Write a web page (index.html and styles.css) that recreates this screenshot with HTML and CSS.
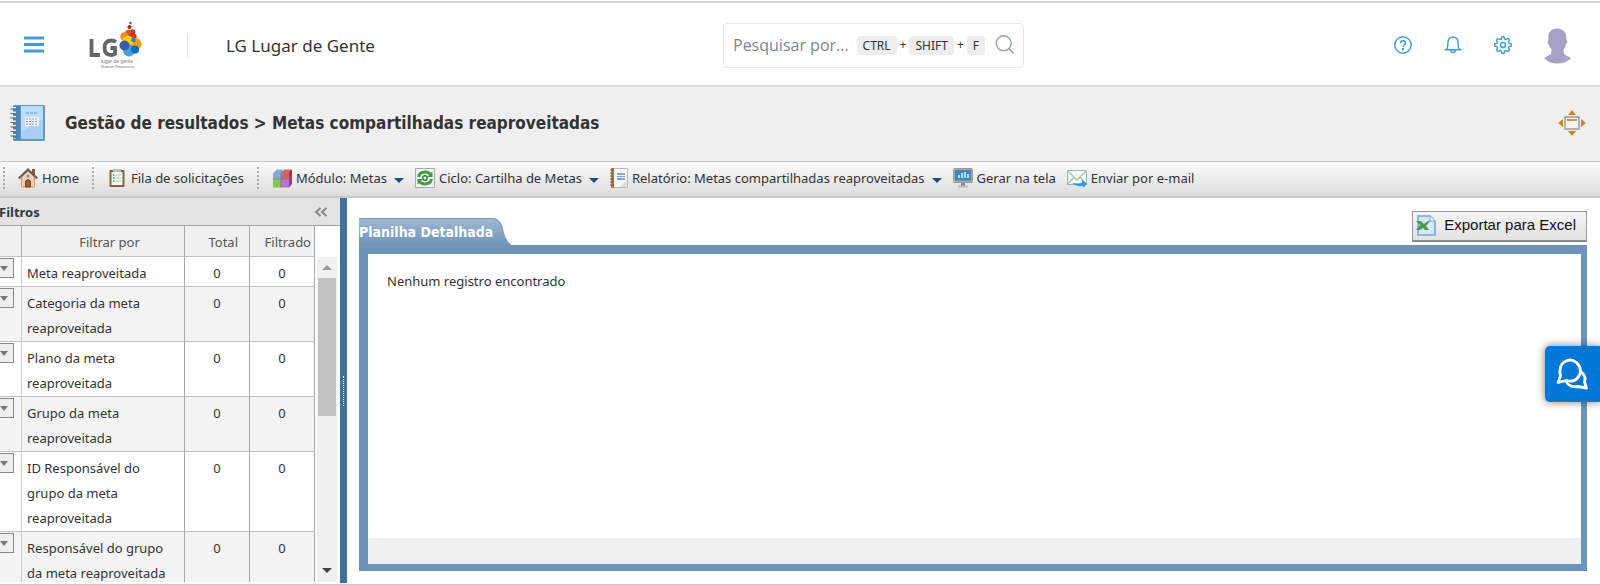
FILE: index.html
```html
<!DOCTYPE html>
<html lang="pt-BR">
<head>
<meta charset="utf-8">
<title>Metas compartilhadas reaproveitadas</title>
<link rel="stylesheet" href="styles.css">
</head>
<body>
<header class="topbar">
  <button class="icon-btn menu" aria-label="Menu"><svg width="20" height="18" viewBox="0 0 20 18"><path d="M0 2h20M0 8.500h20M0 15h20" stroke="#3d9ddb" stroke-width="3"/></svg></button>
  <div class="logo">
    <svg width="56" height="48" viewBox="0 0 56 48">
      <circle cx="43.500" cy="2" r="1.200" fill="#a5382c"/><circle cx="42.500" cy="6" r="2.100" fill="#982f2b"/>
      <circle cx="45.500" cy="11" r="2.800" fill="#c33a2b"/><circle cx="41.500" cy="12" r="3.200" fill="#dd5425"/>
      <circle cx="37.500" cy="15.500" r="4.200" fill="#ee8b24"/><circle cx="45.500" cy="16" r="4.200" fill="#e52b27"/>
      <circle cx="48.500" cy="23" r="6" fill="#fb9c15"/><circle cx="41" cy="20" r="5.500" fill="#ffd203"/>
      <circle cx="42" cy="29.500" r="6" fill="#3ea5dd"/><circle cx="37.500" cy="24.500" r="5" fill="#3d5ca8"/>
      <circle cx="48" cy="28.500" r="4" fill="#0a6fc0"/><circle cx="46.500" cy="19" r="2.300" fill="#1e88c9"/>
      <path d="M4.500 18V34H13M29 21Q27 19.500 24.500 19.500Q17.500 19.500 17.500 26.500Q17.500 34 24.500 34Q26.500 34 28 33V27H23.500" fill="none" stroke="#666" stroke-width="3.800"/>
      <text x="14" y="42" class="logo-tag">lugar de gente</text><text x="14" y="47" class="logo-sub">Human Resources</text>
    </svg>
  </div>
  <div class="company">LG Lugar de Gente</div>
  <label class="search">
    <input type="text" placeholder="Pesquisar por..." aria-label="Pesquisar por">
    <kbd>CTRL</kbd><span>+</span><kbd>SHIFT</kbd><span>+</span><kbd>F</kbd>
    <svg width="20" height="20" viewBox="0 0 20 20" fill="none" stroke="#9aa5ae" stroke-width="1.500"><circle cx="8.700" cy="8.300" r="7.500"/><path d="M14 13.600l4.700 4.700"/></svg>
  </label>
  <nav class="actions">
    <button class="icon-btn" aria-label="Ajuda"><svg width="20" height="20" viewBox="0 0 20 20" fill="none" stroke="#3d9ddb" stroke-width="1.400"><circle cx="10" cy="10" r="8.200"/><path d="M7.500 8q0-2.300 2.500-2.300T12.500 8q0 1.200-1.300 1.900T10 12"/><circle cx="10" cy="14.300" r=".5" fill="#3d9ddb"/></svg></button>
    <button class="icon-btn" aria-label="Notificações"><svg width="20" height="20" viewBox="0 0 20 20" fill="none" stroke="#3d9ddb" stroke-width="1.400"><path d="M1.500 14.700h17M3.500 14.500Q5 12.500 5 7.500Q5.200 2 10 2t5 5.500q0 5 1.500 7M7.500 15q.5 2.500 2.500 2.500t2.500-2.500"/></svg></button>
    <button class="icon-btn" aria-label="Configurações"><svg width="20" height="20" viewBox="0 0 20 20" fill="none" stroke="#3d9ddb" stroke-width="1.400" stroke-linejoin="round"><path d="M8.300 4L9 1.700h2L11.700 4l1.200.5L15 3.400 16.600 5l-1.100 2.100.5 1.200 2.300.7v2l-2.300.7-.5 1.200 1.100 2.100-1.600 1.600-2.100-1.100-1.200.5-.7 2.300H9L8.300 16l-1.200-.5L5 16.600 3.400 15l1.100-2.100L4 11.700 1.700 11V9L4 8.300l.5-1.200L3.400 5 5 3.400l2.100 1.100z"/><circle cx="10" cy="10" r="2.500"/></svg></button>
    <button class="icon-btn avatar" aria-label="Perfil"><svg width="28" height="38" viewBox="5 0 28 38"><path d="M6 32q5-3 7-4l.5-4.500Q11 21 10.500 18q-2-2 0-4Q9 3 19 2.500q10 .5 9.500 11.500 2 2-.5 4-.5 3-2.500 5.500L26 28q2 1.500 7 4-5 5.500-13.500 5.500T6 32z" fill="#a7a1c8"/></svg></button>
  </nav>
</header>

<div class="titlebar">
  <svg width="38" height="38" viewBox="0 0 38 38">
    <rect x="5" y="1" width="32" height="36" rx="1.500" fill="#5f97c6"/><rect x="13" y="2" width="22" height="33" fill="#a9d0f3"/><path d="M13 2h22v13L13 28z" fill="#bddcf7"/>
    <path d="M5 2h7v34H5z" fill="#4f83b3"/><path d="M5 3v32" stroke="#e8eef4" stroke-width="6" stroke-dasharray="1.500 3"/><path d="M5 4.500v30" stroke="#666" stroke-width="5" stroke-dasharray="1 3.500"/>
    <rect x="17" y="13" width="14" height="9" fill="#eef5fc"/><path d="M18 9h11" stroke="#5f97c6" stroke-width="1" stroke-dasharray="3 1"/><path d="M18 15h11M18 17.500h11M18 20h11" stroke="#999" stroke-dasharray="2 1"/>
  </svg>
  <h1>Gestão de resultados &gt; Metas compartilhadas reaproveitadas</h1>
  <button class="icon-btn" aria-label="Expandir"><svg width="28" height="26" viewBox="0 0 28 26"><path d="M14 0l4 5h-8zM14 26l4-5h-8zM0 13l5-4v8zM28 13l-5-4v8z" fill="#e07b1e"/><rect x="7" y="7" width="14" height="12" fill="#f5f5f5" stroke="#999" stroke-width="1.500"/><path d="M9 10h10" stroke="#e08a4a" stroke-width="2"/></svg></button>
</div>

<nav class="toolbar">
  <i class="sep"></i>
  <button class="tool"><svg width="20" height="20" viewBox="0 0 20 20"><path d="M14 1h3v6h-3z" fill="#7d5a4b"/><path d="M3.500 9L10 3l6.500 6v10h-13z" fill="#ecd2b2" stroke="#b58b68" stroke-width=".8"/><path d="M.7 10.500L10 1.500l9.300 9" fill="none" stroke="#6b5a56" stroke-width="2"/><path d="M7.500 19v-6q2.500-3 5 0v6z" fill="#a35b26" stroke="#74401d"/><circle cx="10" cy="8" r="1.500" fill="#8296a8"/></svg><span>Home</span></button>
  <i class="sep sep-gap"></i>
  <button class="tool"><svg width="20" height="20" viewBox="0 0 20 20"><rect x="2.500" y="2" width="15" height="17" rx="1" fill="#8d5f45"/><path d="M4.500 4h11v13h-11z" fill="#f1faf7"/><path d="M6 1h8v3H6z" fill="#bcbcbc"/><path d="M8.500 7H14M8.500 10H14M8.500 13H14" stroke="#aac5c5"/><path d="M6 7h1.500M6 10h1.500M6 13h1.500" stroke="#4c9b58" stroke-width="1.500"/></svg><span>Fila de solicitações</span></button>
  <i class="sep sep-gap"></i>
  <button class="tool"><svg width="20" height="20" viewBox="0 0 21 20"><path d="M1 5l4-4h6v8l-1 2H1z" fill="#82abd0"/><path d="M1 11h9v9H1z" fill="#84c64e"/><path d="M10 4l3-3h8v8l-3 2h-8z" fill="#ce656d"/><path d="M18 4l3-3v8l-3 3z" fill="#9d3940"/><path d="M9 11h9l3-2v7l-3 4H9z" fill="#be73d4"/><path d="M18 11l3-2v7l-3 4z" fill="#7f3f97"/><path d="M1 11h17M9.500 4v16" stroke="#657d70" stroke-width=".7"/></svg><span>Módulo: Metas</span><i class="caret"></i></button>
  <button class="tool"><svg width="20" height="20" viewBox="0 0 20 20"><path d="M.5.500h19v19H.5z" fill="#f4f4f4" stroke="#aaa"/><path d="M3.500 9q1-5 6.500-5 4 0 6 3M16.500 11q-1 5-6.500 5-4 0-6-3" fill="none" stroke="#3d9e3f" stroke-width="3"/><path d="M17.500 3.500V9H12zM2.500 16.500V11H8z" fill="#3d9e3f"/><circle cx="10" cy="10" r="2.200" fill="none" stroke="#348438" stroke-width="1.500"/></svg><span>Ciclo: Cartilha de Metas</span><i class="caret"></i></button>
  <button class="tool"><svg width="18" height="20" viewBox="0 0 18 20"><path d="M2.500.500h15v19h-15z" fill="#fafafa" stroke="#bbb"/><path d="M1 0h3v20H1z" fill="#c76e4c"/><path d="M0 2h4M0 5h4M0 8h4M0 11h4M0 14h4M0 17h4" stroke="#8e5b45"/><path d="M7 5h8v2H7zM7 8h8v1H7zM7 10h8v2H7z" fill="#7ca7e6"/><path d="M17 12l-7 7h7z" fill="#ddd"/></svg><span>Relatório: Metas compartilhadas reaproveitadas</span><i class="caret"></i></button>
  <button class="tool"><svg width="20" height="20" viewBox="0 0 20 20"><rect x=".5" y=".5" width="19" height="14" rx="1" fill="#aaa" stroke="#999"/><path d="M2 2h16v10.500H2z" fill="#3f87bd"/><path d="M5 10V7h2v3M8 10V5h2v5M11 10V4h2v6M14 10V6h2v4" fill="#b8dbf0"/><path d="M8 15h4v3H8z" fill="#888"/><path d="M5 18.500h10" stroke="#bbb" stroke-width="2"/></svg><span>Gerar na tela</span></button>
  <button class="tool"><svg width="20" height="20" viewBox="0 0 20 20"><path d="M.5 2.500h19v14H.5z" fill="#f4f9f7" stroke="#a0b5b0"/><path d="M1 3l9 9 9-9M1 16l6-7M19 16l-6-7" fill="none" stroke="#a9c0b8" stroke-width="1.300"/><path d="M5 14.500q6 2 10 0V12l5 4-4 4v-2q-7 1-11-3.500z" fill="#3498db"/></svg><span>Enviar por e-mail</span></button>
</nav>

<div class="workspace">
  <aside class="filters">
    <div class="filters-head"><h2>Filtros</h2><button class="icon-btn" aria-label="Recolher"><svg width="14" height="10" viewBox="0 0 14 10"><path d="M6.500 1l-4.500 4 4.500 4M12.500 1L8 5l4.500 4" fill="none" stroke="#888" stroke-width="2"/></svg></button></div>
    <div class="filters-body">
      <table class="grid">
        <colgroup><col class="c-pick"><col><col class="c-num"><col class="c-num"></colgroup>
        <thead><tr><th></th><th class="name">Filtrar por</th><th class="total">Total</th><th class="filtered">Filtrado</th></tr></thead>
        <tbody>
          <tr><td><button class="pick" aria-label="Filtrar"></button></td><td>Meta reaproveitada</td><td class="n">0</td><td class="n">0</td></tr>
          <tr><td><button class="pick" aria-label="Filtrar"></button></td><td>Categoria da meta reaproveitada</td><td class="n">0</td><td class="n">0</td></tr>
          <tr><td><button class="pick" aria-label="Filtrar"></button></td><td>Plano da meta reaproveitada</td><td class="n">0</td><td class="n">0</td></tr>
          <tr><td><button class="pick" aria-label="Filtrar"></button></td><td>Grupo da meta reaproveitada</td><td class="n">0</td><td class="n">0</td></tr>
          <tr><td><button class="pick" aria-label="Filtrar"></button></td><td>ID Responsável do grupo da meta reaproveitada</td><td class="n">0</td><td class="n">0</td></tr>
          <tr><td><button class="pick" aria-label="Filtrar"></button></td><td>Responsável do grupo da meta reaproveitada</td><td class="n">0</td><td class="n">0</td></tr>
        </tbody>
      </table>
      <div class="scroll"><i class="up"></i><div class="track"><div class="thumb"></div></div><i class="down"></i></div>
    </div>
  </aside>
  <div class="splitter"><i></i></div>
  <main class="content">
    <div class="tabs">
      <div class="tab">
        <svg class="tab-shape" viewBox="0 0 152 29" preserveAspectRatio="none"><defs><linearGradient id="g" x2="0" y2="1"><stop offset="0" stop-color="#a3b9d3"/><stop offset="1" stop-color="#6e94ba"/></linearGradient></defs><path d="M0 0h134q6 0 9 9 3 17 9 20H0z" fill="url(#g)"/><path d="M0 .5h134q6 0 9 9 3 16 9 19" fill="none" stroke="#7e96b2"/></svg>
        <span>Planilha Detalhada</span>
      </div>
      <button class="export"><svg width="20" height="21" viewBox="0 0 20 21"><path d="M2 1h12l5 5v14H2z" fill="#d5e7fb" stroke="#76a5dd" stroke-width="1.500"/><path d="M14 1v5h5" fill="#f4faff" stroke="#76a5dd"/><path d="M0 6h5l3 3 4-3h2l-4 5 3 4H9l-2-2-3 2H0l4-5z" fill="#4d9b45"/></svg><span>Exportar para Excel</span></button>
    </div>
    <section class="sheet"><p>Nenhum registro encontrado</p><div class="sheet-foot"></div></section>
  </main>
</div>
<button class="chat" aria-label="Conversar"><svg width="32" height="32" viewBox="0 0 32 32" fill="none" stroke="#fff" stroke-width="2.800" stroke-linejoin="round"><path d="M4.500 18Q2.500 9 7.500 4.500q6.500-5 13 0 6 6 3 12.500-4 8-13 5.500L2 24.500z"/><path d="M10 23q3 7 12 5.500l8.500 1.500-2-6q2-6-3.500-10"/></svg></button>
</body>
</html>
```
FILE: styles.css
```css
* { box-sizing: border-box; }
html, body { height: 100%; }
body {
  margin: 0;
  display: flex;
  flex-direction: column;
  overflow: hidden;
  border-bottom: 1px solid #c8c8c8;
  background: #fff;
  color: #333;
  font: 13px/20px "Noto Sans", "Open Sans", sans-serif;
}
h1, h2, p { margin: 0; }
button { font: inherit; color: inherit; }
svg { display: block; flex: none; }
.icon-btn { border: 0; padding: 0; background: none; }

.topbar {
  position: relative;
  flex: none;
  display: flex;
  align-items: center;
  height: 86px;
  margin-top: 1px;
  padding: 2px 29px 0 24px;
  border-top: 2px solid #cfd5d4;
  border-bottom: 2px solid #dcdedd;
}
.logo { margin-left: 43px; padding-right: 44px; }
.logo-tag { font: 5px "Liberation Sans", sans-serif; fill: #777; }
.logo-sub { font: 4px "Liberation Sans", sans-serif; fill: #777; }
.company {
  padding-left: 38px;
  border-left: 1px solid #e2e2e2;
  font-size: 17px;
  line-height: 25px;
}
.search {
  position: absolute;
  left: calc(50% - 77px);
  display: flex;
  align-items: center;
  width: 301px;
  height: 45px;
  padding: 0 8px 0 9px;
  border: 1px solid #e2e6ea;
  border-radius: 4px;
  font-size: 12px;
}
.search input {
  flex: 1;
  min-width: 0;
  padding: 0;
  border: 0;
  outline: 0;
  font: 16px/24px "Open Sans", sans-serif;
}
.search input::placeholder { color: #7b8691; opacity: 1; }
.search kbd {
  padding: 0 6px;
  border-radius: 4px;
  background: #ededed;
  font: 12px/19px "Noto Sans", sans-serif;
}
.search span { padding: 0 3px; }
.search svg { margin-left: 10px; }
.actions { display: flex; align-items: center; gap: 30px; margin-left: auto; }

.titlebar {
  flex: none;
  display: flex;
  align-items: center;
  height: 74px;
  padding: 0 14px 2px 8px;
  background: #efefef;
}
.titlebar h1 {
  flex: 1;
  padding-left: 19px;
  font: bold 17px/24px "DejaVu Sans Condensed", "Noto Sans", sans-serif;
}

.toolbar {
  flex: none;
  display: flex;
  align-items: center;
  height: 37px;
  padding: 0 3px 2px;
  border-top: 1px solid #c4c4c4;
  border-bottom: 2px solid #c9c9c9;
  background: linear-gradient(#fcfcfc, #dcdcdc);
}
.sep { height: 22px; border-left: 2px dotted #aaa; }
.sep-gap { margin-left: 13px; }
.tool {
  display: flex;
  align-items: center;
  gap: 4px;
  margin-left: 13px;
  padding: 0;
  border: 0;
  background: none;
  white-space: nowrap;
}
.tool + .tool { margin-left: 11px; }
.caret {
  margin-left: 3px;
  margin-top: 4px;
  border: 5px solid transparent;
  border-top-color: #1c4f80;
  border-bottom: 0;
}

.workspace { flex: 1; min-height: 0; display: flex; }
.filters {
  flex: none;
  display: flex;
  flex-direction: column;
  width: 346px;
  margin-left: -6px;
}
.filters-head {
  flex: none;
  display: flex;
  align-items: center;
  justify-content: space-between;
  height: 28px;
  padding: 0 12px 0 5px;
  border-bottom: 1px solid #9da3a8;
  background: #e3e3e3;
}
.filters-head h2 { font: bold 13px/20px "Noto Sans", sans-serif; color: #2c3844; }
.filters-body { flex: 1; min-height: 0; display: flex; overflow: hidden; margin-bottom: 2px; }
.grid { width: 321px; height: 0; table-layout: fixed; border-collapse: separate; border-spacing: 0; }
.c-pick { width: 28px; }
.c-num { width: 65px; }
.grid th, .grid td {
  border-right: 1px solid #a4a8ac;
  border-bottom: 1px solid #c2c2c2;
  vertical-align: top;
}
.grid th { height: 31px; padding: 6px 3px 0; background: #f0f0f0; font-weight: normal; color: #555; }
.grid th.name { padding-left: 16px; }
.grid th.total { text-align: right; padding-right: 11px; }
.grid th.filtered { text-align: right; }
.grid td { padding: 4px 5px 0; line-height: 25px; }
.grid td:first-child { padding: 1px 0 0; border-right-color: #ccc; }
.grid tr:nth-child(even) td { background: #f4f4f4; }
.grid td.n { text-align: center; }
.pick {
  display: block;
  width: 20px;
  height: 20px;
  padding: 6px 5px;
  border: 1px solid #888;
  background: #eee;
}
.pick::before {
  content: "";
  display: block;
  border: 4px solid transparent;
  border-top: 5px solid #777;
  border-bottom: 0;
}
.scroll {
  display: flex;
  flex-direction: column;
  align-items: center;
  width: 20px;
  margin: 31px 0 0 2px;
  padding: 8px 0 9px;
  background: #f0f0f0;
}
.scroll .up { border: 5px solid transparent; border-bottom-color: #999; border-top: 0; }
.scroll .down { border: 5px solid transparent; border-top-color: #444; border-bottom: 0; }
.track { flex: 1; width: 18px; padding-top: 8px; }
.thumb { height: 138px; background: #c1c1c1; }
.splitter {
  flex: none;
  display: flex;
  align-items: center;
  justify-content: center;
  width: 7px;
  margin-bottom: 1px;
  background: #41719a;
}
.splitter i { height: 30px; border-left: 1px dotted #fff; }

.content { flex: 1; min-width: 0; display: flex; flex-direction: column; padding: 13px 13px 13px 12px; }
.tabs { display: flex; justify-content: space-between; height: 34px; }
.tab {
  position: relative;
  width: 152px;
  margin-top: 7px;
  color: #fff;
  font: bold 14px/29px "DejaVu Sans Condensed", sans-serif;
  white-space: nowrap;
}
.tab-shape { position: absolute; inset: 0; width: 100%; height: 100%; }
.tab span { position: relative; }
.export {
  display: flex;
  align-items: center;
  gap: 8px;
  height: 31px;
  padding: 0 10px 2px 3px;
  border: 1px solid #999;
  border-bottom: 2px solid #888;
  background: linear-gradient(#f6f6f6, #e2e2e2);
  color: #111;
  font: 15px/20px "Liberation Sans", sans-serif;
}
.sheet {
  flex: 1;
  display: flex;
  flex-direction: column;
  justify-content: space-between;
  border: solid #6f94ba;
  border-width: 9px 6px 7px 9px;
}
.sheet p { padding: 17px 19px; }
.sheet-foot { height: 26px; background: #efefef; }
.chat {
  position: fixed;
  right: 0;
  top: 346px;
  width: 55px;
  height: 56px;
  padding: 0 11px;
  border: 0;
  border-radius: 5px 0 0 5px;
  background: #0078d7;
  box-shadow: 0 0 8px #0008;
}
```
